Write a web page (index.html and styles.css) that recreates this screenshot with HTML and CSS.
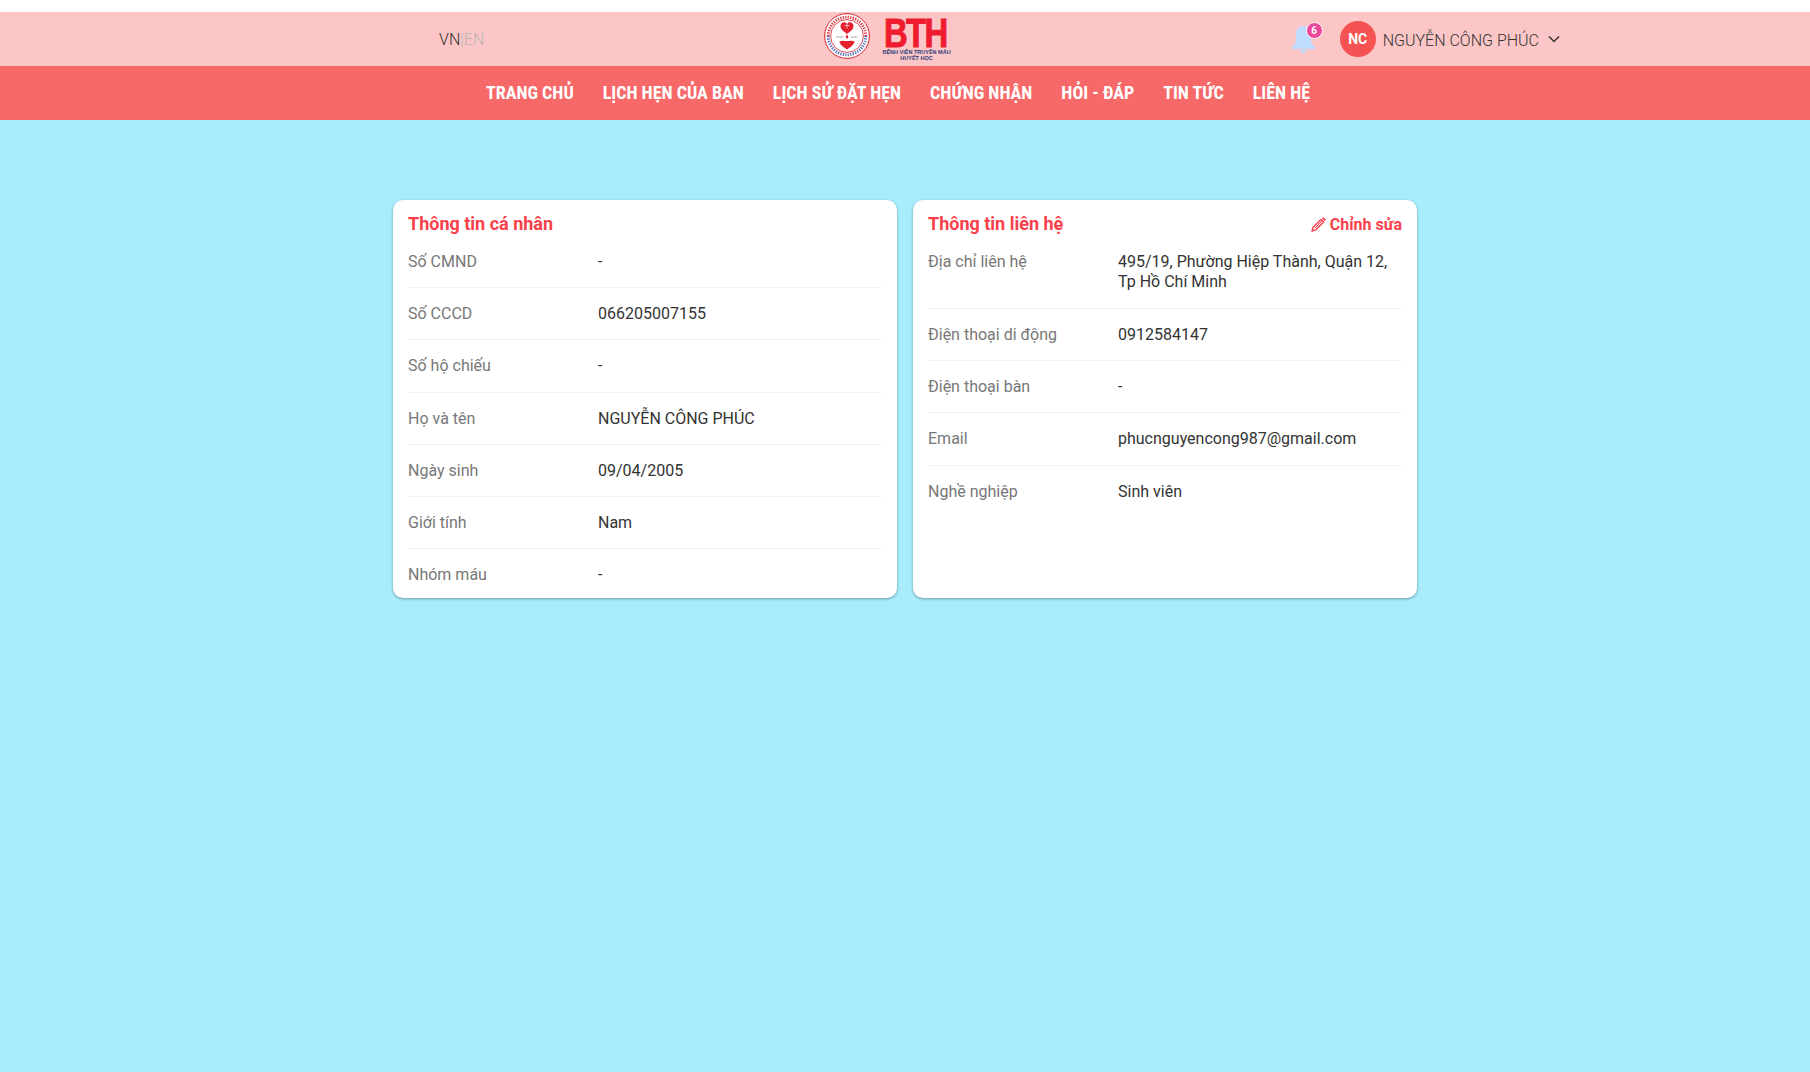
FILE: index.html
```html
<!DOCTYPE html>
<html lang="vi">
<head>
    <meta charset="UTF-8"/>
    <title>Thông tin cá nhân</title>
    <link rel="stylesheet" href="styles.css">
</head>
<body>
<header class="topbar">
    <div class="lang"><span>VN</span><span class="lang-sep">|</span><span class="lang-off">EN</span></div>
    <div class="logos">
        <svg class="seal" viewBox="0 0 46 46" width="46" height="46">
            <circle cx="23" cy="23" r="22.4" fill="#fff" stroke="#d8232f" stroke-width="1"/>
            <path d="M4.200 23a18.800 18.800 0 0 1 37.600 0" fill="none" stroke="#d8404a" stroke-width="3" stroke-dasharray="1.300 1.200"/>
            <path d="M4.200 23a18.800 18.800 0 0 0 37.600 0" fill="none" stroke="#5a78bc" stroke-width="3" stroke-dasharray="1.300 1.200"/>
            <circle cx="23" cy="23" r="16.400" fill="#fff" stroke="#d8232f" stroke-width=".8"/>
            <path d="M23 21c-3-2.500-6.500-4.500-6.500-8 0-2.300 1.800-3.800 3.700-3.800 1.200 0 2.200.6 2.800 1.600.6-1 1.600-1.600 2.800-1.600 1.900 0 3.700 1.500 3.700 3.800 0 3.500-3.500 5.500-6.500 8z" fill="#e3212d"/>
            <path d="M20.500 12.500h5M23 10.500v5" stroke="#f6b0b4" stroke-width="1"/>
            <path d="M15.500 28.500c2.500-1.500 5-.5 7.500-.5s5-1 7.500.5c0 3-3.500 5-7.500 8-4-3-7.500-5-7.500-8z" fill="#e3212d"/>
            <path d="M23 21.500c-.8 1.200-1.300 1.800-1.300 2.600a1.300 1.300 0 0 0 2.600 0c0-.8-.5-1.400-1.300-2.600z" fill="#e3212d"/>
            <path d="M12.500 24h7M26.500 24h7" stroke="#777" stroke-width="1" stroke-dasharray="1 .6"/>
        </svg>
        <div class="brand">
            <div class="brand-mark"><span>BTH</span></div>
            <div class="brand-name">BỆNH VIỆN TRUYỀN MÁU<br>HUYẾT HỌC</div>
        </div>
    </div>
    <div class="account">
        <div class="bell">
            <svg viewBox="0 0 25 27" width="25" height="27">
                <path d="M12.500 0C7 0 5 4 5 9v5c0 3-2 5-4 7-.7.7-.5 2 1 2h21c1.500 0 1.700-1.300 1-2-2-2-4-4-4-7V9c0-5-2-9-7.500-9z" fill="#bfdbfe"/>
                <path d="M9 24h7c-.5 2-2 3-3.500 3S9.500 26 9 24z" fill="#bfdbfe"/>
            </svg>
            <span class="badge">6</span>
        </div>
        <div class="avatar">NC</div>
        <span class="username">NGUYỄN CÔNG PHÚC</span>
        <svg class="chevron" viewBox="0 0 12 8" width="12" height="8">
            <path d="M1 1.500l5 5 5-5" fill="none" stroke="#333" stroke-width="1.500"/>
        </svg>
    </div>
</header>

<nav class="mainnav">
    <a href="#">TRANG CHỦ</a>
    <a href="#">LỊCH HẸN CỦA BẠN</a>
    <a href="#">LỊCH SỬ ĐẶT HẸN</a>
    <a href="#">CHỨNG NHẬN</a>
    <a href="#">HỎI - ĐÁP</a>
    <a href="#">TIN TỨC</a>
    <a href="#">LIÊN HỆ</a>
</nav>

<main class="content">
    <div class="cards">
        <section class="card">
            <div class="card-head">
                <h2>Thông tin cá nhân</h2>
            </div>
            <div class="row"><div class="label">Số CMND</div><div class="value">-</div></div>
            <div class="row"><div class="label">Số CCCD</div><div class="value">066205007155</div></div>
            <div class="row"><div class="label">Số hộ chiếu</div><div class="value">-</div></div>
            <div class="row"><div class="label">Họ và tên</div><div class="value">NGUYỄN CÔNG PHÚC</div></div>
            <div class="row"><div class="label">Ngày sinh</div><div class="value">09/04/2005</div></div>
            <div class="row"><div class="label">Giới tính</div><div class="value">Nam</div></div>
            <div class="row"><div class="label">Nhóm máu</div><div class="value">-</div></div>
        </section>

        <section class="card">
            <div class="card-head">
                <h2>Thông tin liên hệ</h2>
                <a class="edit" href="#">
                    <svg viewBox="0 0 16 16" width="16" height="16">
                        <path d="M12.300 1l2.700 2.700-1.300 1.300L11 2.300z" fill="#f9404a"/>
                        <path d="M10 3.400l2.600 2.600-7.900 7.900-3.700 1.100 1.100-3.700z" fill="none" stroke="#f9404a" stroke-width="1.400" stroke-linejoin="round"/>
                        <path d="M4 12l6.800-6.800" stroke="#f9404a" stroke-width="1"/>
                    </svg>
                    Chỉnh sửa
                </a>
            </div>
            <div class="row"><div class="label">Địa chỉ liên hệ</div><div class="value value-long">495/19, Phường Hiệp Thành, Quận 12, Tp Hồ Chí Minh</div></div>
            <div class="row"><div class="label">Điện thoại di động</div><div class="value">0912584147</div></div>
            <div class="row"><div class="label">Điện thoại bàn</div><div class="value">-</div></div>
            <div class="row"><div class="label">Email</div><div class="value">phucnguyencong987@gmail.com</div></div>
            <div class="row"><div class="label">Nghề nghiệp</div><div class="value">Sinh viên</div></div>
        </section>
    </div>
</main>
</body>
</html>
```

FILE: styles.css
```css
body {
    margin: 0;
    background: #fff;
    font-family: Roboto, "Noto Sans", sans-serif;
    font-size: 16px;
    color: #333;
}

.topbar {
    margin-top: 12px;
    height: 54px;
    padding: 0 250px 0 439px;
    background: #fcc6c6;
    display: flex;
    align-items: center;
    justify-content: space-between;
}

.lang {
    color: #333;
    font-weight: 300;
}

.lang-sep,
.lang-off {
    color: #b5b5b5;
}

.logos {
    display: flex;
    align-items: flex-start;
    gap: 14px;
    height: 54px;
}

.seal {
    margin-top: 1px;
}

.brand {
    width: 66px;
    margin-top: 6px;
    text-align: center;
}

.brand-mark {
    height: 30px;
    font-family: "Liberation Sans", sans-serif;
    font-weight: 700;
    font-size: 41px;
    line-height: 30px;
    color: #ee1c2e;
    text-align: left;
    white-space: nowrap;
}

.brand-mark span {
    display: inline-block;
    letter-spacing: -2px;
    -webkit-text-stroke: 1px #ee1c2e;
    transform: scaleX(0.8);
    transform-origin: left center;
}

.brand-name {
    margin-top: 1px;
    margin-left: -2px;
    font-family: "Liberation Sans", sans-serif;
    font-weight: 700;
    font-size: 5.5px;
    line-height: 6px;
    color: #2c3f7c;
    white-space: nowrap;
}

.account {
    display: flex;
    align-items: center;
}

.bell {
    position: relative;
    width: 25px;
    height: 27px;
    margin-right: 24px;
}

.badge {
    position: absolute;
    top: -4px;
    right: -7px;
    width: 15px;
    height: 15px;
    border: 1px solid #fff;
    border-radius: 50%;
    background: #ec4899;
    color: #fff;
    font-size: 10px;
    font-weight: 700;
    line-height: 15px;
    text-align: center;
}

.avatar {
    width: 36px;
    height: 36px;
    border-radius: 50%;
    background: #f55353;
    color: #fff;
    font-size: 14px;
    font-weight: 700;
    line-height: 36px;
    text-align: center;
}

.username {
    margin-left: 7px;
    margin-right: 9px;
    padding-top: 2px;
    color: #333;
    font-weight: 300;
}

.mainnav {
    height: 54px;
    padding: 0 14px 2px 0;
    box-sizing: border-box;
    background: #f76969;
    display: flex;
    align-items: center;
    justify-content: center;
    gap: 29px;
}

.mainnav a {
    color: #fff;
    font-family: "Roboto Condensed", Roboto, sans-serif;
    font-size: 18px;
    font-weight: 700;
    text-decoration: none;
}

.content {
    min-height: 952px;
    box-sizing: border-box;
    padding-top: 80px;
    background: #a8ecfd;
}

.cards {
    width: 1024px;
    margin: 0 auto;
    display: grid;
    grid-template-columns: 1fr 1fr;
    gap: 16px;
}

.card {
    background: #fff;
    border-radius: 10px;
    box-shadow: 0 1px 3px rgba(0, 0, 0, 0.35);
    padding: 13px 15px 14px;
}

.card-head {
    display: flex;
    align-items: center;
    justify-content: space-between;
}

.card-head h2 {
    margin: 0;
    font-size: 18px;
    font-weight: 700;
    line-height: 22px;
    color: #f9404a;
}

.edit {
    display: flex;
    align-items: center;
    gap: 3px;
    color: #f9404a;
    font-weight: 700;
    text-decoration: none;
}

.row {
    display: flex;
    padding: 16px 0;
    line-height: 19.2px;
    border-bottom: 1px solid #f3f3f3;
}

.card-head + .row {
    padding-top: 17px;
}

.row:last-child {
    padding-bottom: 0;
    border-bottom: 0;
}

.label {
    flex: 0 0 190px;
    color: #777;
}

.value {
    flex: 1;
    color: #333;
}

.value-long {
    line-height: 20px;
}
```
